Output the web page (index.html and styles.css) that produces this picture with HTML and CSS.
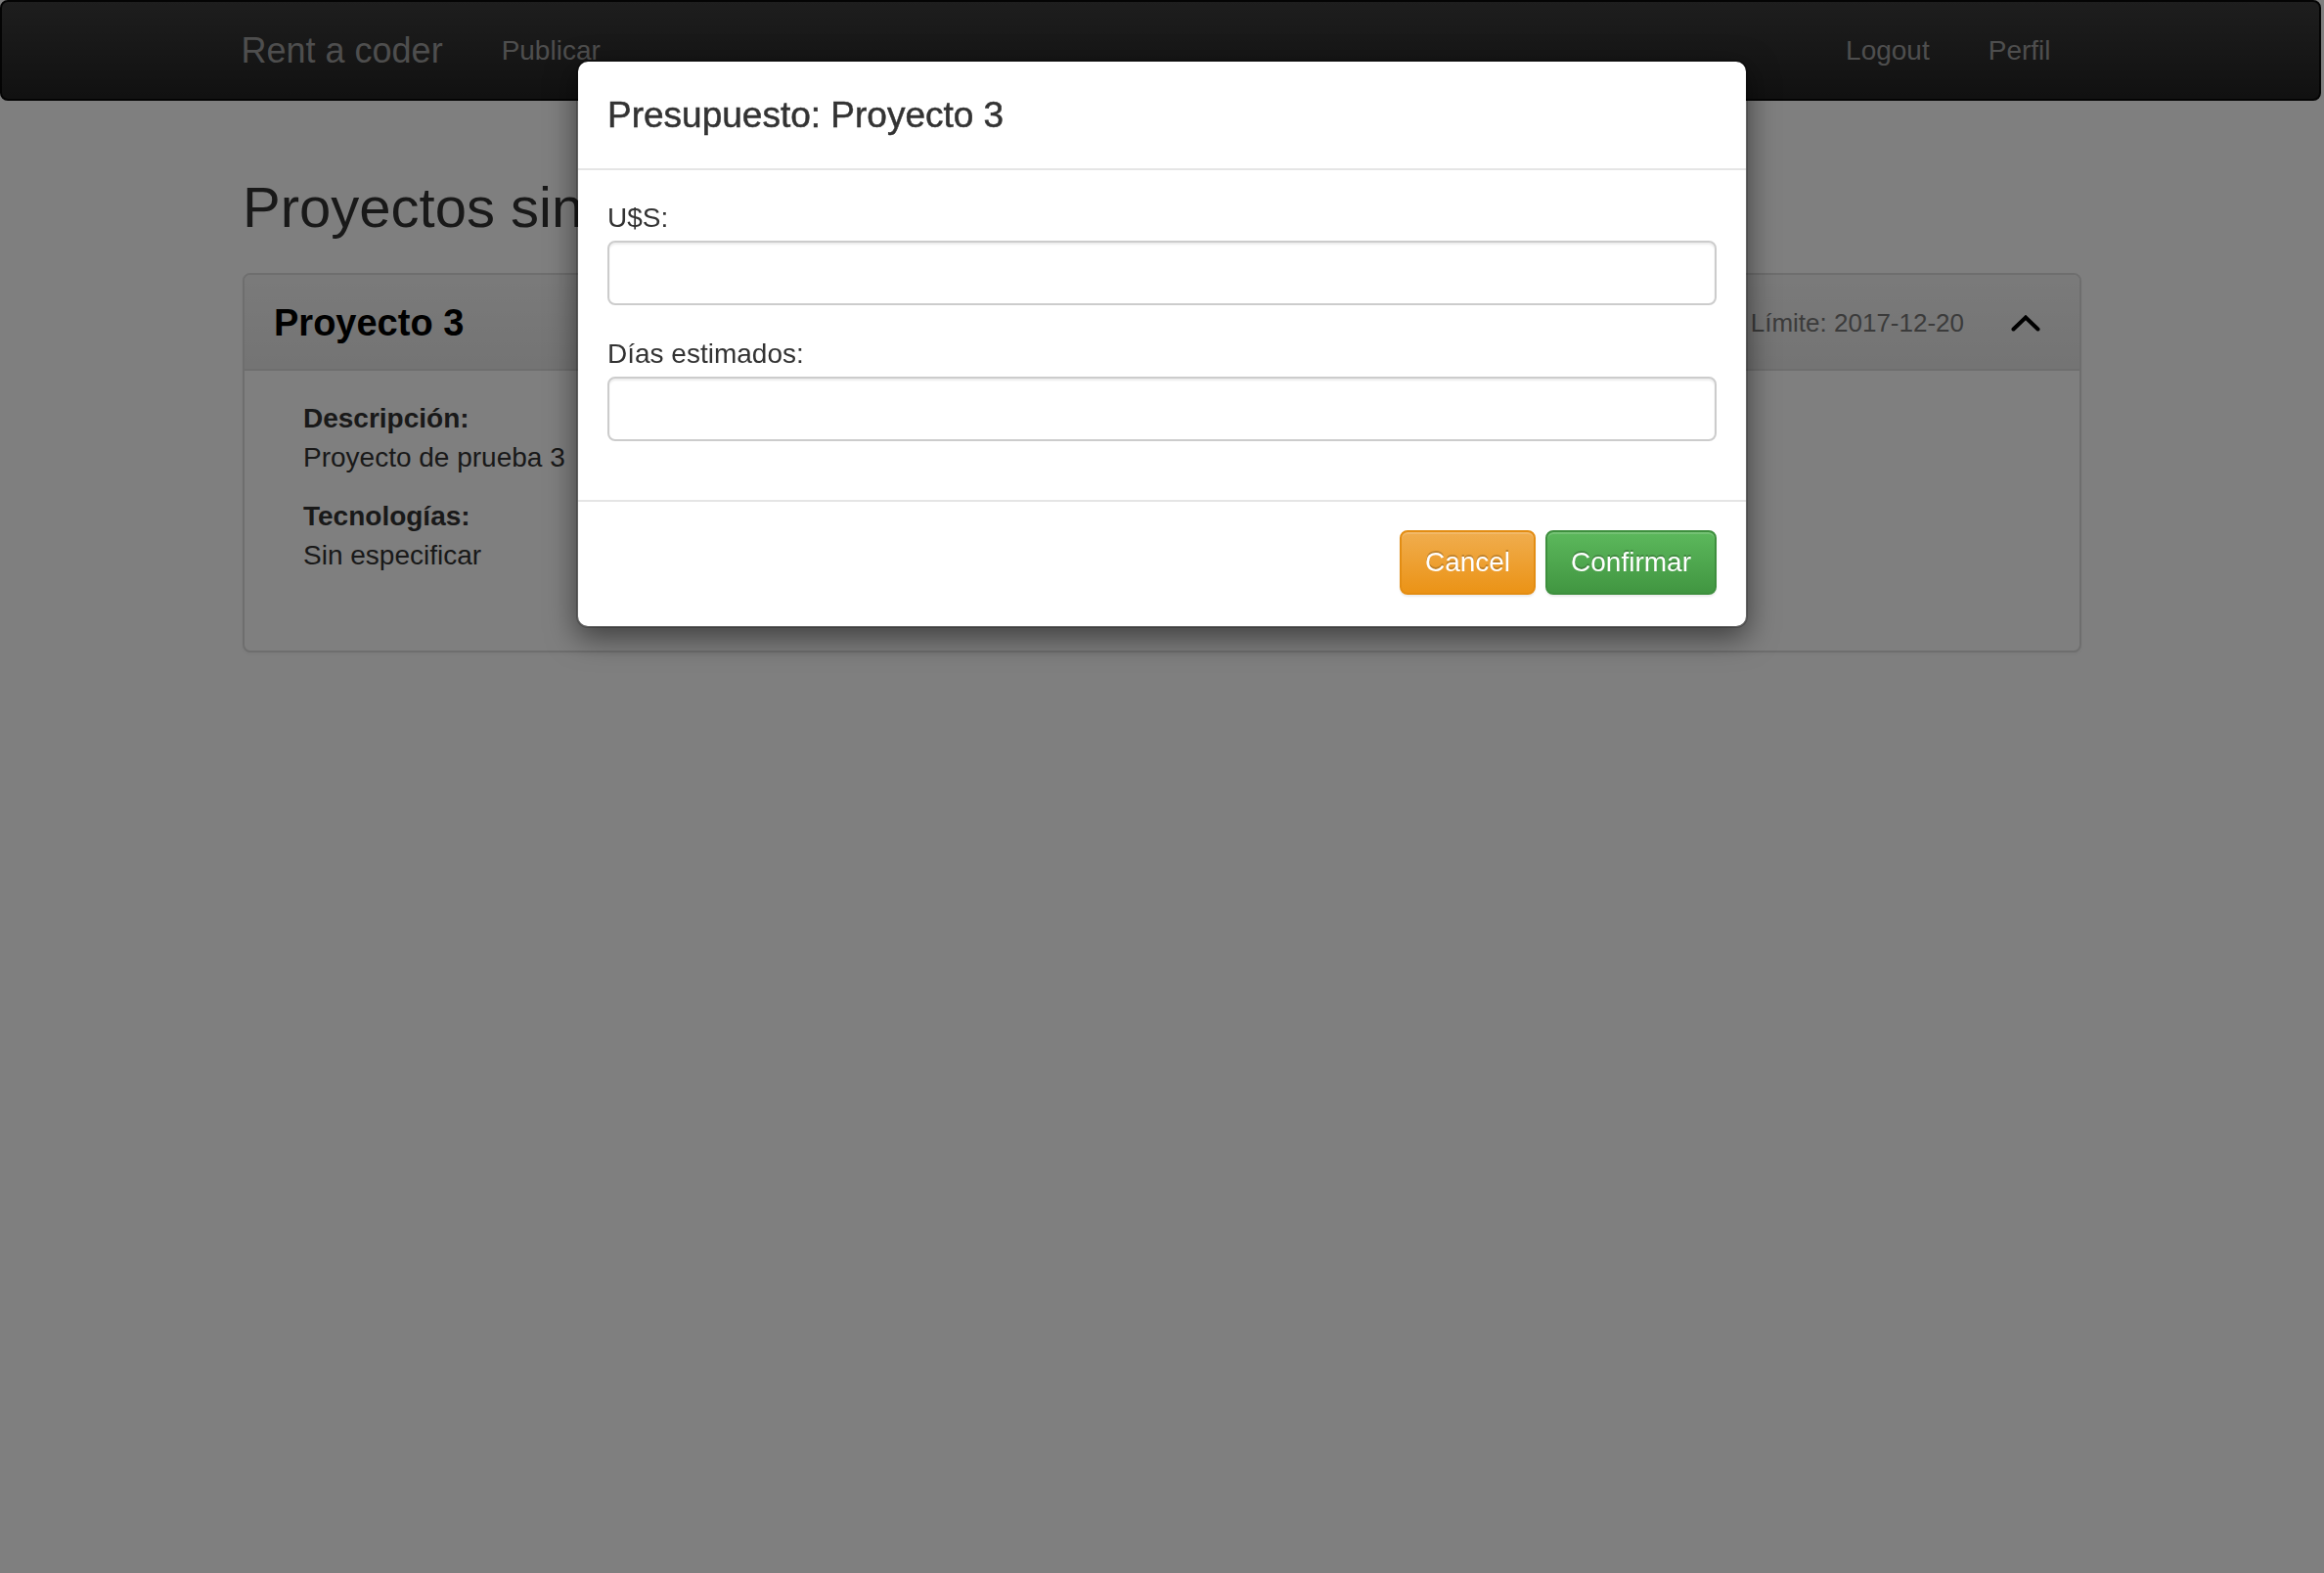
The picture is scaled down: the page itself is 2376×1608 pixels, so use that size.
FILE: index.html
```html
<!DOCTYPE html>
<html lang="es">
<head>
<meta charset="utf-8">
<title>Rent a coder</title>
<link rel="stylesheet" href="styles.css">
</head>
<body>
<nav class="navbar">
  <div class="navbar-inner">
    <a class="brand" href="#">Rent a coder</a>
    <a class="nav-link" href="#">Publicar</a>
    <div class="nav-right">
      <a class="nav-link" href="#">Logout</a>
      <a class="nav-link" href="#">Perfil</a>
    </div>
  </div>
</nav>

<main class="container">
  <h2 class="page-title">Proyectos sin presupuesto</h2>
  <section class="panel">
    <div class="panel-heading">
      <h3 class="panel-title">Proyecto 3</h3>
      <span class="deadline">Fecha Límite: 2017-12-20</span>
      <svg class="chevron" width="30" height="17" viewBox="0 0 30 17" aria-hidden="true">
        <polyline points="2.5,14.5 15,2.5 27.5,14.5" fill="none" stroke="#000" stroke-width="4" stroke-linecap="round" stroke-linejoin="miter"/>
      </svg>
    </div>
    <div class="panel-body">
      <div class="detail">
        <p><strong>Descripción:</strong><br>Proyecto de prueba 3</p>
        <p><strong>Tecnologías:</strong><br>Sin especificar</p>
      </div>
    </div>
  </section>
</main>

<div class="backdrop"></div>

<div class="modal">
  <div class="modal-header">
    <h4 class="modal-title">Presupuesto: Proyecto 3</h4>
  </div>
  <div class="modal-body">
    <div class="form-group">
      <label class="form-label" for="usd">U$S:</label>
      <input class="form-control" id="usd" type="text">
    </div>
    <div class="form-group">
      <label class="form-label" for="dias">Días estimados:</label>
      <input class="form-control" id="dias" type="text">
    </div>
  </div>
  <div class="modal-footer">
    <button class="btn btn-warning" type="button">Cancel</button>
    <button class="btn btn-success" type="button">Confirmar</button>
  </div>
</div>
</body>
</html>
```

FILE: styles.css
```css
* { box-sizing: border-box; }

html, body {
  margin: 0;
  padding: 0;
}

body {
  font-family: "Liberation Sans", Arial, Helvetica, sans-serif;
  font-size: 28px;
  line-height: 40px;
  color: #333;
  background: #fff;
  min-height: 1608px;
}

a { text-decoration: none; }

/* Navbar */
.navbar {
  margin-right: 3px;
  height: 103px;
  border: 2px solid #080808;
  border-radius: 8px;
  background: linear-gradient(to bottom, #3c3c3c 0%, #222 100%);
  margin-bottom: 38px;
}

.navbar-inner {
  width: 1940px;
  margin: 0 auto;
  display: flex;
  align-items: center;
  height: 99px;
}

.brand {
  font-size: 36px;
  line-height: 40px;
  color: #9d9d9d;
  padding: 0 30px;
}

.nav-link {
  font-size: 28px;
  line-height: 40px;
  color: #9d9d9d;
  padding: 0 30px;
}

.nav-right {
  margin-left: auto;
  margin-right: 30px;
  display: flex;
}

/* Page */
.container {
  width: 1880px;
  margin: 0 auto;
}

.page-title {
  font-size: 58px;
  font-weight: normal;
  line-height: 66px;
  margin: 0 0 34px;
  padding-top: 38px;
  color: #333;
}

.panel {
  border: 2px solid #ddd;
  border-radius: 8px;
  background: #fff;
  box-shadow: 0 2px 4px rgba(0, 0, 0, .05);
  overflow: hidden;
}

.panel-heading {
  display: flex;
  align-items: center;
  padding: 22px 40px 20px 30px;
  min-height: 98px;
  background: linear-gradient(to bottom, #f5f5f5 0%, #e8e8e8 100%);
  border-bottom: 2px solid #ddd;
}

.panel-title {
  margin: 0;
  font-size: 38px;
  line-height: 53px;
  font-weight: bold;
  color: #000;
  flex: 1;
}

.deadline {
  font-size: 26px;
  color: #777;
  line-height: 40px;
}

.chevron {
  margin-left: 48px;
  display: block;
}

.panel-body {
  padding: 29px 30px 57px;
}

.detail {
  padding-left: 30px;
}

.detail p {
  margin: 0 0 20px;
}

.detail strong {
  color: #333;
}

/* Backdrop */
.backdrop {
  position: fixed;
  inset: 0;
  background: rgba(0, 0, 0, .5);
}

/* Modal */
.modal {
  position: absolute;
  top: 61px;
  left: 589px;
  width: 1198px;
  background: #fff;
  border: 2px solid rgba(0, 0, 0, .2);
  border-radius: 12px;
  box-shadow: 0 10px 30px rgba(0, 0, 0, .5);
  background-clip: padding-box;
}

.modal-header {
  padding: 30px 30px 30px;
  border-bottom: 2px solid #e5e5e5;
}

.modal-title {
  margin: 0;
  font-size: 37px;
  font-weight: normal;
  line-height: 49px;
  color: #333;
  -webkit-text-stroke: 0.5px #333;
}

.modal-body {
  padding: 29px 30px 30px;
}

.form-group {
  margin-bottom: 30px;
}

.form-label {
  display: block;
  line-height: 40px;
  margin-bottom: 3px;
  color: #333;
}

.form-control {
  display: block;
  width: 100%;
  height: 66px;
  padding: 12px 24px;
  font-family: inherit;
  font-size: 28px;
  color: #555;
  background: #fff;
  border: 2px solid #ccc;
  border-radius: 8px;
  box-shadow: inset 0 2px 2px rgba(0, 0, 0, .075);
}

.modal-footer {
  display: flex;
  justify-content: flex-end;
  gap: 10px;
  padding: 29px 30px 32px;
  border-top: 2px solid #e5e5e5;
}

.btn {
  height: 66px;
  padding: 0 24px;
  font-family: inherit;
  font-size: 28px;
  line-height: 40px;
  color: #fff;
  border-radius: 8px;
  border: 2px solid transparent;
  text-shadow: 0 -2px 0 rgba(0, 0, 0, .2);
  box-shadow: inset 0 2px 0 rgba(255, 255, 255, .15), 0 2px 2px rgba(0, 0, 0, .075);
}

.btn-warning {
  background: linear-gradient(to bottom, #f0ad4e 0%, #eb9316 100%);
  border-color: #e38d13;
}

.btn-success {
  background: linear-gradient(to bottom, #5cb85c 0%, #419641 100%);
  border-color: #3e8f3e;
}
```
